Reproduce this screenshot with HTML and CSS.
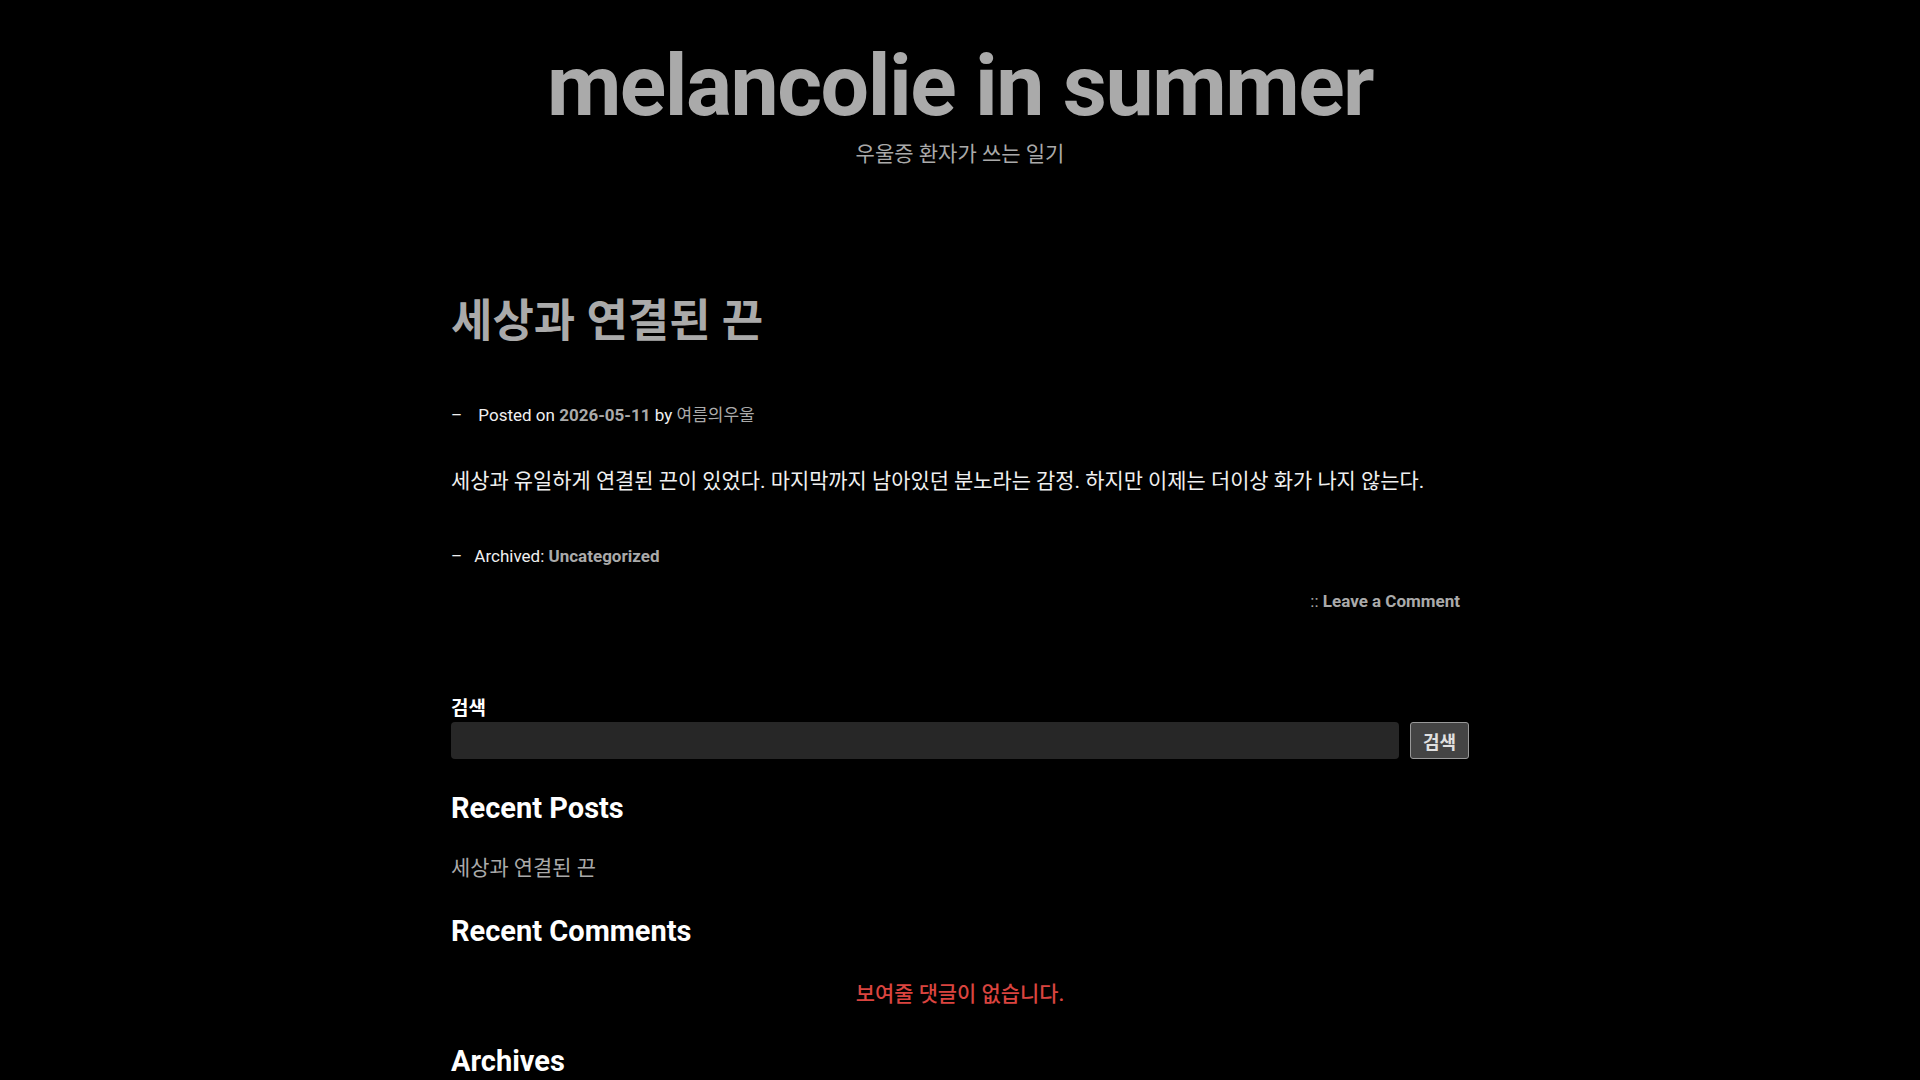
FILE: index.html
```html
<!DOCTYPE html>
<html lang="ko">
<head>
    <meta charset="UTF-8">
    <meta name="viewport" content="width=device-width, initial-scale=1.0">
    <title>melancolie in summer</title>
    <link rel="stylesheet" href="styles.css">
</head>
<body>
    <header class="site-header">
        <h1 class="site-title"><a href="#">melancolie in summer</a></h1>
        <p class="site-description">우울증 환자가 쓰는 일기</p>
    </header>

    <main class="site-main">
        <article class="post">
            <h2 class="entry-title"><a href="#">세상과 연결된 끈</a></h2>
            <div class="entry-meta dash">
                Posted on <a href="#" class="strong">2026-05-11</a> by <a href="#">여름의우울</a>
            </div>
            <div class="entry-content">
                <p>세상과 유일하게 연결된 끈이 있었다. 마지막까지 남아있던 분노라는 감정. 하지만 이제는 더이상 화가 나지 않는다.</p>
            </div>
            <div class="entry-cats dash">
                Archived: <a href="#" class="strong">Uncategorized</a>
            </div>
            <div class="entry-comments">
                :: <a href="#" class="strong">Leave a Comment</a>
            </div>
        </article>

        <aside class="widgets">
            <form class="search-form">
                <label for="s" class="search-label">검색</label>
                <div class="search-row">
                    <input type="text" id="s" class="search-input">
                    <button type="submit" class="search-button">검색</button>
                </div>
            </form>

            <section class="widget">
                <h2 class="widget-title">Recent Posts</h2>
                <ul class="widget-list">
                    <li><a href="#">세상과 연결된 끈</a></li>
                </ul>
            </section>

            <section class="widget">
                <h2 class="widget-title">Recent Comments</h2>
                <p class="no-comments">보여줄 댓글이 없습니다.</p>
            </section>

            <section class="widget">
                <h2 class="widget-title">Archives</h2>
            </section>
        </aside>
    </main>
</body>
</html>
```

FILE: styles.css
```css
body {
    margin: 0;
    background-color: #000;
    color: #f0f0f0;
    font-family: Roboto, "Noto Sans CJK KR", sans-serif;
    font-size: 20.9px;
}
a {
    color: #aaa;
    text-decoration: none;
}
.site-header {
    text-align: center;
    padding-top: 32px;
}
.site-title {
    margin: 0;
    font-size: 86px;
    line-height: 108px;
    font-weight: 700;
    letter-spacing: -1.5px;
}
.site-title a {
    color: #aaa;
}
.site-description {
    margin: 0;
    color: #aaa;
    font-size: 21px;
    line-height: 28px;
}
.site-main {
    width: 1018px;
    margin: 0 auto;
    padding-top: 124px;
}
.entry-title {
    margin: 0;
    padding-top: 3px;
    font-size: 45px;
    line-height: 54px;
    font-weight: 700;
}
.entry-meta,
.entry-cats,
.entry-comments {
    font-size: 17px;
    line-height: 27px;
}
.dash::before {
    content: "–";
    margin-right: 8px;
}
.entry-meta {
    margin-top: 53px;
}
.entry-meta::before {
    margin-right: 12px;
}
.strong {
    font-weight: 700;
}
.entry-content p {
    margin: 37px 0 0;
    line-height: 31px;
}
.entry-cats {
    margin-top: 46px;
}
.entry-comments {
    margin-top: 18px;
    text-align: right;
    padding-right: 9px;
    color: #aaa;
}
.widgets {
    margin-top: 80px;
}
.search-label {
    display: block;
    font-size: 19px;
    line-height: 27px;
    font-weight: 700;
    color: #fff;
}
.search-row {
    display: flex;
    gap: 11px;
}
.search-input {
    flex: 1;
    height: 37px;
    box-sizing: border-box;
    background-color: #272727;
    border: none;
    border-radius: 4px;
    color: #eee;
}
.search-button {
    width: 59px;
    height: 37px;
    background-color: #444;
    border: 1px solid #999;
    border-radius: 3px;
    color: #e0e0e0;
    font-family: Roboto, "Noto Sans CJK KR", sans-serif;
    font-size: 18px;
    font-weight: 700;
}
.widget-title {
    margin: 32px 0 0;
    font-size: 29px;
    line-height: 35px;
    font-weight: 700;
    color: #fff;
}
.widget-list {
    list-style: none;
    margin: 27px 0 0;
    padding: 0;
    line-height: 31px;
}
.no-comments {
    margin: 30px 0 0;
    text-align: center;
    line-height: 31px;
    color: #d9443f;
    font-weight: 500;
}
.widget + .widget .widget-title {
    margin-top: 30px;
}
.widget:last-child .widget-title {
    margin-top: 34px;
}
```
